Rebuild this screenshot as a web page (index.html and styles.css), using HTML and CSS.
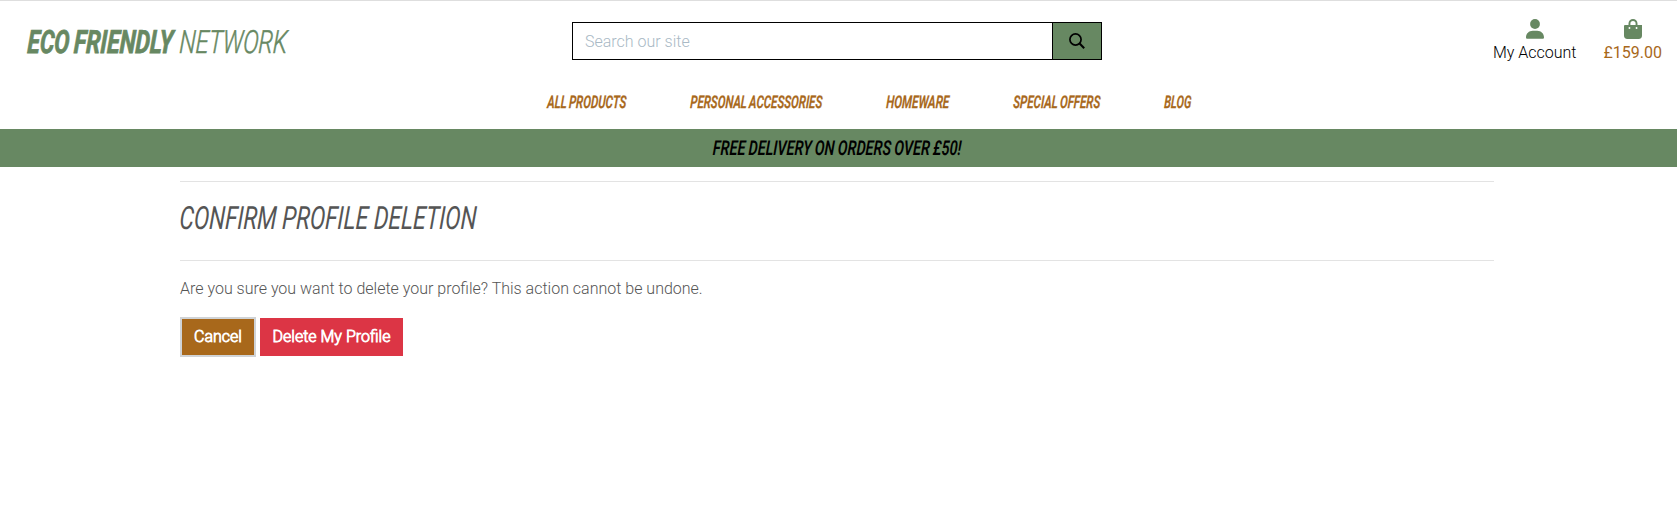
FILE: index.html
```html
<!DOCTYPE html>
<html lang="en">
<head>
<meta charset="utf-8">
<title>Eco Friendly Network</title>
<link rel="stylesheet" href="styles.css">
</head>
<body>
<header class="header">
  <div class="top">
    <a class="logo"><svg class="type" width="270" height="36">
      <text><tspan class="logo-bold" x="0" y="27.5" textLength="42" lengthAdjust="spacingAndGlyphs">ECO</tspan> <tspan class="logo-bold" x="46.500" y="27.5" textLength="99" lengthAdjust="spacingAndGlyphs">FRIENDLY</tspan> <tspan class="logo-light" x="152" y="27.5" textLength="108" lengthAdjust="spacingAndGlyphs">NETWORK</tspan></text>
    </svg></a>
    <form class="search">
      <input class="search-input" type="text" placeholder="Search our site">
      <button class="search-button" type="button" aria-label="Search"><svg width="16" height="16" viewBox="0 0 16 16"><circle cx="6.5" cy="6.5" r="5.6" fill="none" stroke="#000" stroke-width="1.7"/><path d="M10.6 10.6 15.2 15.2" stroke="#000" stroke-width="2.1"/></svg></button>
    </form>
    <div class="links">
      <a class="link account"><svg width="18" height="20" viewBox="0 0 18 20"><circle cx="9" cy="5" r="4.9"/><path d="M0 18.4C0 14.6 3 11.8 6.8 11.8h4.4c3.8 0 6.8 2.8 6.8 6.6 0 .8-.6 1.3-1.3 1.3H1.3C.6 19.700 0 19.200 0 18.400z"/></svg><span>My Account</span></a>
      <a class="link bag"><svg width="18" height="20" viewBox="0 0 18 20"><path fill-rule="evenodd" d="M4.500 6V4.500a4.500 4.500 0 0 1 9 0V6H18v10.500a3.400 3.400 0 0 1-3.400 3.400H3.400A3.400 3.400 0 0 1 0 16.500V7.200C0 6.500.500 6 1.200 6zM6.400 6h5.200V4.500a2.600 2.600 0 0 0-5.200 0zM5.450 8a.95.95 0 1 0 0 1.900.95.95 0 0 0 0-1.900zM12.550 8a.95.95 0 1 0 0 1.900.95.95 0 0 0 0-1.900z"/></svg><span>£159.00</span></a>
    </div>
  </div>
  <nav class="nav">
    <svg class="type" width="80" height="20"><text x="0" y="16" textLength="79" lengthAdjust="spacingAndGlyphs">ALL PRODUCTS</text></svg>
    <svg class="type" width="133" height="20"><text x="0" y="16" textLength="132" lengthAdjust="spacingAndGlyphs">PERSONAL ACCESSORIES</text></svg>
    <svg class="type" width="64" height="20"><text x="0" y="16" textLength="63" lengthAdjust="spacingAndGlyphs">HOMEWARE</text></svg>
    <svg class="type" width="88" height="20"><text x="0" y="16" textLength="87" lengthAdjust="spacingAndGlyphs">SPECIAL OFFERS</text></svg>
    <svg class="type" width="28" height="20"><text x="0" y="16" textLength="27" lengthAdjust="spacingAndGlyphs">BLOG</text></svg>
  </nav>
</header>
<div class="banner"><svg class="type" width="252" height="26"><text x="0.5" y="20" textLength="248.500" lengthAdjust="spacingAndGlyphs">FREE DELIVERY ON ORDERS OVER £50!</text></svg></div>
<main class="content">
  <div class="title"><svg class="type" width="300" height="36"><text x="-1" y="28.5" textLength="297" lengthAdjust="spacingAndGlyphs">CONFIRM PROFILE DELETION</text></svg></div>
  <p class="message">Are you sure you want to delete your profile? This action cannot be undone.</p>
  <div class="actions">
    <button class="btn cancel">Cancel</button>
    <button class="btn delete">Delete My Profile</button>
  </div>
</main>
</body>
</html>
```
FILE: styles.css
```css
* { box-sizing: border-box; }
body {
  margin: 0;
  background: #fff;
  color: #555;
  font: 300 16px/24px Roboto, sans-serif;
}
svg { display: block; flex: none; }
.type { overflow: visible; font-family: Roboto, sans-serif; font-style: italic; }
.type text { transform-box: fill-box; transform-origin: 0 80%; transform: skewX(-3deg); }
.header { height: 129px; border-top: 1px solid #dedede; }
.top {
  display: grid;
  grid-template-columns: 572px 530px 1fr;
  height: 80px;
}
.logo { padding: 24px 0 0 27px; }
.logo .type { fill: #678862; font-size: 32px; }
.logo-bold { font-weight: 700; stroke: #678862; stroke-width: .8px; }
.logo-light { font-weight: 300; stroke: #678862; stroke-width: .5px; }
.search { display: flex; height: 38px; margin-top: 21px; }
.search-input {
  width: 481px;
  padding: 2px 12px 0;
  border: 1px solid #000;
  border-radius: 0;
  font: inherit;
}
.search-input::placeholder { color: #a9b9c5; opacity: 1; }
.search-button {
  display: flex;
  align-items: center;
  justify-content: center;
  width: 50px;
  margin-left: -1px;
  padding: 0;
  border: 1px solid #000;
  background: #678862;
}
.links { display: flex; justify-content: flex-end; gap: 27px; padding: 18px 15px 0 0; }
.link { display: flex; flex-direction: column; align-items: center; gap: 2px; fill: #678862; }
.account { color: #000; }
.bag { color: #a8681b; font-weight: 400; }
.nav { display: flex; gap: 63px; padding: 10.5px 0 0 546.5px; }
.nav .type { fill: #a8681b; font-size: 17.5px; font-weight: 600; word-spacing: -1px; stroke: #a8681b; stroke-width: .3px; }
.banner {
  display: flex;
  justify-content: center;
  height: 38px;
  padding: 6px 1px 0 0;
  background: #678862;
}
.banner .type { fill: #000; font-size: 20.5px; font-weight: 600; word-spacing: -.5px; }
.content { width: 1314px; margin: 14px 0 0 180px; }
.title {
  height: 80px;
  padding-top: 18px;
  border-top: 1px solid #e3e3e3;
  border-bottom: 1px solid #e3e3e3;
}
.title .type { fill: #555; font-size: 32px; font-weight: 400; }
.message { margin: 16px 0; }
.actions { display: flex; align-items: center; gap: 4px; }
.btn {
  height: 38px;
  padding: 0;
  border: 0;
  color: #fff;
  font: 300 16px/24px Roboto, sans-serif;
  -webkit-text-stroke: .8px #fff;
}
.cancel { width: 76px; height: 40px; border: 2px solid #d0d3d6; background: #a8681b; }
.delete { width: 143px; background: #dc3545; }
```
